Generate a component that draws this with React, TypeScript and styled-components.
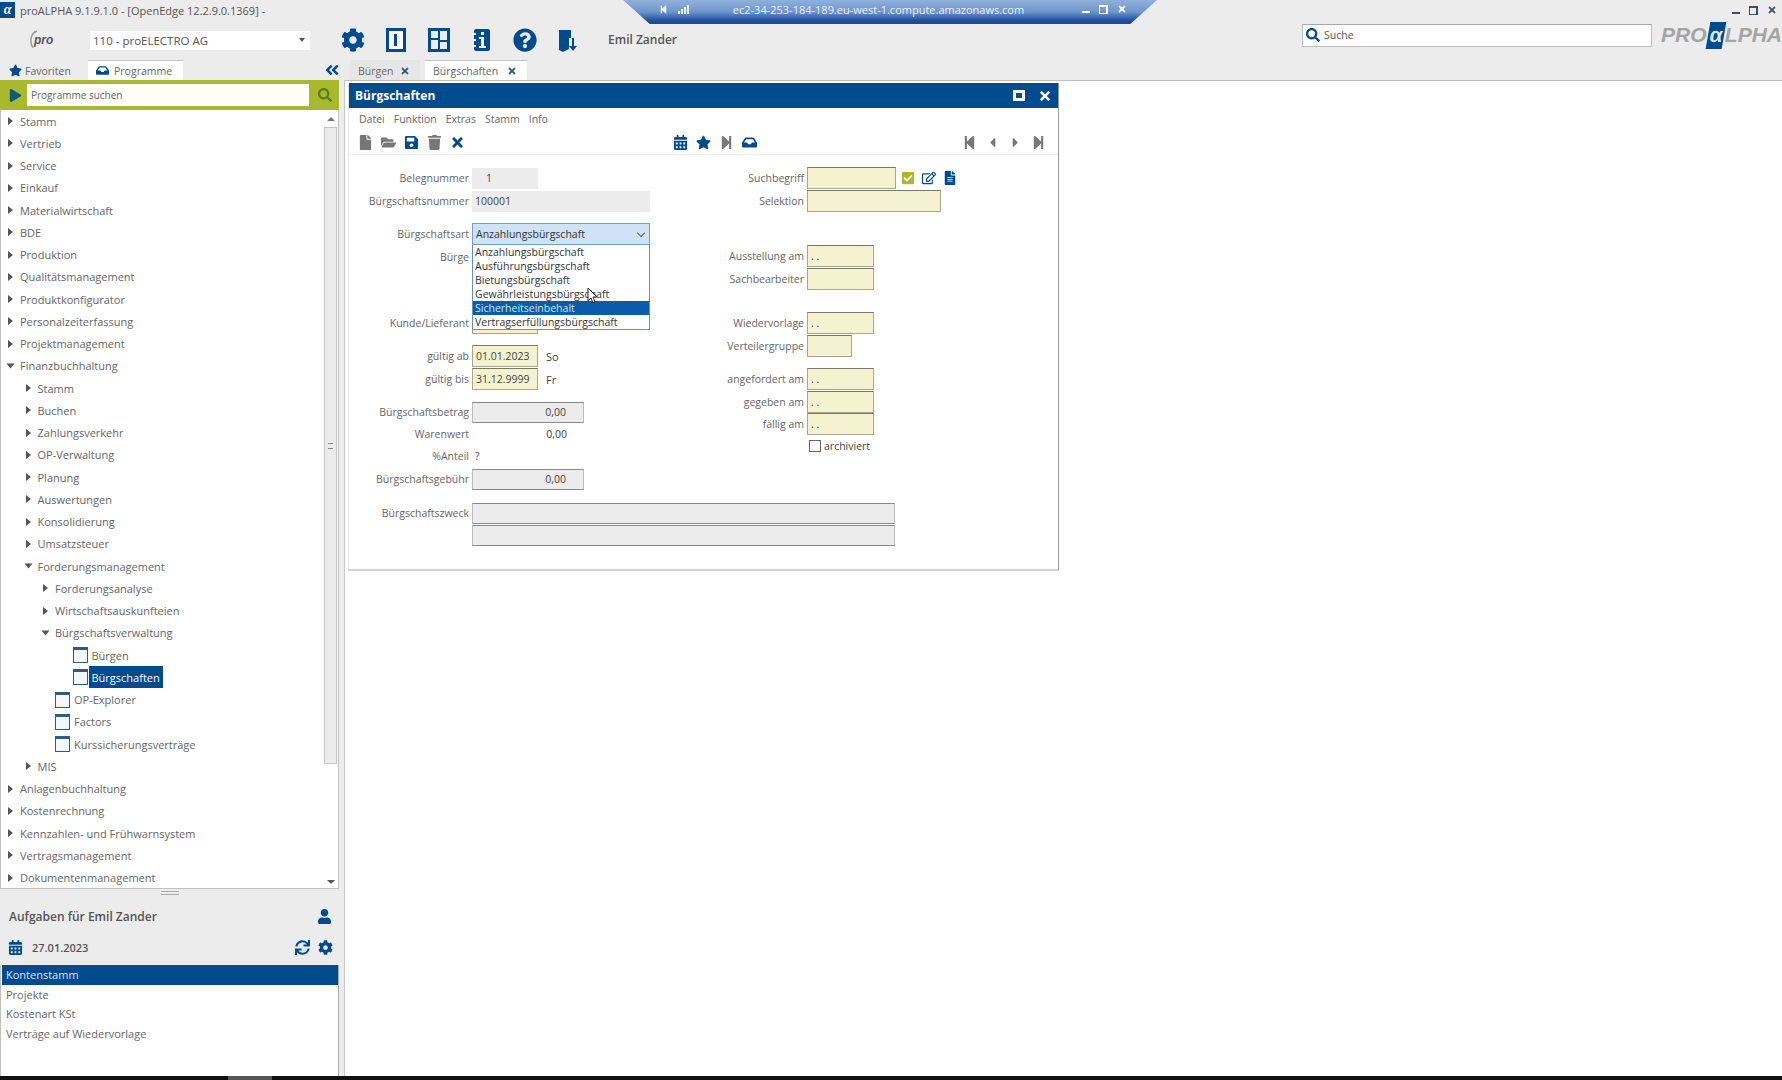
import styled, { createGlobalStyle } from 'styled-components'
import {
    FaCalendarAlt,
    FaCaretLeft,
    FaCaretRight,
    FaCheckSquare,
    FaCog,
    FaFile,
    FaFileAlt,
    FaFolderOpen,
    FaInfo,
    FaPlay,
    FaQuestionCircle,
    FaRegEdit,
    FaSave,
    FaSearch,
    FaStar,
    FaStepBackward,
    FaStepForward,
    FaSync,
    FaTimes,
    FaTrash,
    FaUser,
    FaAngleDoubleLeft,
    FaInbox,
} from 'react-icons/fa'

const BLUE = '#004b8d'
const GREY = '#ececec'

const GlobalStyle = createGlobalStyle`
    html, body {
        margin: 0;
        padding: 0;
        background: ${GREY};
    }
    * {
        box-sizing: border-box;
    }
`

const Page = styled.div`
    position: relative;
    width: 1782px;
    height: 1080px;
    overflow: hidden;
    display: flex;
    flex-direction: column;
    background: ${GREY};
    color: #555;
    font-family: 'Open Sans', 'Liberation Sans', sans-serif;
    font-size: 11px;
`

/* title bar */
const TitleBar = styled.div`
    height: 20px;
    display: flex;
    align-items: center;
    flex: none;
    padding-right: 5px;
`

const AppBadge = styled.div`
    width: 15px;
    height: 16px;
    background: ${BLUE};
    color: #fff;
    font: italic bold 14px/15px 'Liberation Serif', serif;
    text-align: center;
    margin-right: 5px;
`

const WindowButtons = styled.div`
    margin-left: auto;
    display: flex;
    align-items: center;
    gap: 9px;
    color: ${(p: { $light?: boolean }) => (p.$light ? '#fff' : '#3a5068')};
    font-size: 10px;
`

const MinGlyph = styled.span`
    display: block;
    width: 8px;
    height: 2px;
    margin-top: 5px;
    background: currentColor;
`

const RestoreGlyph = styled.span`
    display: block;
    width: 9px;
    height: 9px;
    border: 2px solid currentColor;
    border-bottom-width: 1px;
    border-left-width: 1px;
`

/* remote session bar lies over the title bar */
const RemoteBar = styled.div`
    position: absolute;
    left: 623px;
    top: 0;
    width: 534px;
    height: 24px;
    clip-path: polygon(0 0, 100% 0, 95% 100%, 5% 100%);
    background: linear-gradient(#8fb0dc, #6e95cb 50%, #1f4f9e 85%, #1d4a92);
    color: #eaf1fb;
    display: flex;
    align-items: center;
    padding: 0 30px 6px 36px;
    font-size: 11px;
`

const SignalBars = styled.div`
    display: flex;
    align-items: flex-end;
    gap: 1px;
    height: 9px;
    margin-left: 10px;
`

const SignalBar = styled.span<{ $h: number }>`
    width: 2px;
    height: ${(p) => p.$h}px;
    background: #eaf1fb;
`

const RemoteName = styled.span`
    flex: 1;
    text-align: center;
    padding-left: 18px;
    padding-right: 32px;
`

/* top toolbar */
const Toolbar = styled.div`
    height: 40px;
    flex: none;
    display: flex;
    align-items: center;
    padding-left: 28px;
`

const ComboBox = styled.div`
    width: 220px;
    height: 19px;
    margin-left: 32px;
    background: #fff;
    display: flex;
    align-items: center;
    justify-content: space-between;
    padding: 0 5px 0 3px;
    font-size: 11.5px;
`

const SmallDown = styled.span`
    width: 0;
    height: 0;
    border-left: 3px solid transparent;
    border-right: 3px solid transparent;
    border-top: 4px solid #555;
`

const MainIcons = styled.div`
    margin-left: 31px;
    display: flex;
    gap: 19px;
    color: ${BLUE};
`

const MainIcon = styled.div`
    width: 24px;
    height: 24px;
    display: flex;
    align-items: center;
    justify-content: center;
    font-size: 24px;
`

const UserName = styled.div`
    margin-left: 28px;
    font-size: 12px;
    font-weight: 600;
    margin-top: -2px;
`

const GlobalSearch = styled.div`
    margin-left: auto;
    width: 350px;
    height: 23px;
    margin-top: -10px;
    background: #fff;
    border: 1px solid #bdbdbd;
    border-top-color: #a8a8a8;
    display: flex;
    align-items: center;
    gap: 4px;
    padding-left: 3px;
    font-size: 10.5px;
    color: #555;

    svg {
        color: ${BLUE};
        font-size: 14px;
    }
`

const BrandLogo = styled.div`
    width: 121px;
    margin-left: 9px;
    margin-top: -10px;
    display: flex;
    align-items: center;
    font: italic bold 21px/26px 'Liberation Sans', sans-serif;
    color: #a4a4a4;
`

const BrandAlpha = styled.span`
    display: block;
    width: 24px;
    height: 27px;
    background: ${BLUE};
    color: #d9e6f3;
    text-align: center;
    transform: skewX(-10deg);
    margin: 0 1px;
    font-style: normal;
`

/* tabs */
const TabRow = styled.div`
    height: 20px;
    flex: none;
    display: flex;
    align-items: flex-end;
`

const SideTabs = styled.div`
    width: 345px;
    flex: none;
    height: 100%;
    display: flex;
    align-items: stretch;
    padding-left: 9px;
    position: relative;
`

const Tab = styled.div<{ $active?: boolean; $w: number }>`
    width: ${(p) => p.$w}px;
    display: flex;
    align-items: center;
    gap: 5px;
    padding-left: 8px;
    height: 20px;
    background: ${(p) => (p.$active ? '#fff' : 'transparent')};
    border-top: 1px solid ${(p) => (p.$active ? '#c4c4c4' : 'transparent')};
    font-size: 10.5px;
    color: #666;

    svg {
        color: ${BLUE};
    }
`

const FavTab = styled(Tab)`
    padding-left: 0;
    gap: 3px;
    margin-right: 3px;

    svg {
        font-size: 13px;
    }
`

const CollapseBtn = styled.div`
    margin-left: auto;
    margin-right: 5px;
    color: ${BLUE};
    font-size: 16px;
    display: flex;
    align-items: center;
`

const DocTabs = styled.div`
    display: flex;
    height: 100%;
    margin-left: 5px;
    gap: 5px;
`

const DocTab = styled(Tab)`
    padding-left: 8px;
    justify-content: space-between;
    padding-right: 10px;
    background: ${(p) => (p.$active ? '#fff' : '#e6e6e6')};

    svg {
        color: #30536f;
        font-size: 10px;
    }
`

/* body */
const Body = styled.div`
    flex: 1;
    display: flex;
    min-height: 0;
`

const Sidebar = styled.aside`
    width: 345px;
    flex: none;
    display: flex;
    flex-direction: column;
    padding-right: 5px;
    border-right: 1px solid #c8c8c8;
`

const SearchStrip = styled.div`
    height: 30px;
    flex: none;
    background: #a9b92e;
    display: flex;
    align-items: center;
    padding: 0 3px 0 9px;
    gap: 5px;
    color: #0d5a7c;
    font-size: 13px;
`

const ProgramSearch = styled.div`
    flex: 1;
    height: 22px;
    background: #fffef6;
    display: flex;
    align-items: center;
    padding-left: 4px;
    font-size: 10px;
    color: #666;
`

const SearchGlass = styled.div`
    width: 22px;
    display: flex;
    justify-content: center;
    color: #5e7a22;
    font-size: 14px;
`

const TreePanel = styled.div`
    height: 779px;
    flex: none;
    display: flex;
    background: #fff;
    border-left: 1px solid #c0c0c0;
    border-right: 1px solid #c0c0c0;
    border-bottom: 1px solid #c0c0c0;
`

const TreeList = styled.div`
    flex: 1;
    min-width: 0;
`

const TreeRow = styled.div<{ $level: number }>`
    height: 22.25px;
    display: flex;
    align-items: center;
    padding-left: ${(p) => 5 + p.$level * 17.5}px;
    white-space: nowrap;
`

const ArrowSlot = styled.div`
    width: 14px;
    flex: none;
    display: flex;
    align-items: center;
`

const Arrow = styled.span<{ $open?: boolean }>`
    width: 0;
    height: 0;
    margin-left: 2px;
    border-top: 4px solid transparent;
    border-bottom: 4px solid transparent;
    border-left: 5px solid #555;
    transform: ${(p) => (p.$open ? 'rotate(90deg)' : 'none')};
`

const WindowGlyph = styled.span`
    width: 15px;
    height: 16px;
    flex: none;
    margin-right: 4px;
    border: 1px solid #2d5d86;
    border-top-width: 3px;
    background: #f2f7fc;
`

const TreeLabel = styled.span<{ $selected?: boolean }>`
    height: 22px;
    display: flex;
    align-items: center;
    padding: 0 3px;
    margin-left: -3px;
    background: ${(p) => (p.$selected ? BLUE : 'transparent')};
    color: ${(p) => (p.$selected ? '#fff' : '#666')};
`

const Scrollbar = styled.div`
    width: 15px;
    flex: none;
    display: flex;
    flex-direction: column;
    align-items: center;
`

const ScrollArrow = styled.span<{ $down?: boolean }>`
    width: 0;
    height: 0;
    margin: ${(p) => (p.$down ? 'auto 0 4px' : '7px 0 3px')};
    border-left: 4px solid transparent;
    border-right: 4px solid transparent;
    ${(p) =>
        p.$down ? 'border-top: 4px solid #555;' : 'border-bottom: 4px solid #777;'}
`

const ScrollThumb = styled.div`
    width: 13px;
    height: 637px;
    margin-top: 3px;
    background: ${GREY};
    border: 1px solid #c4c4c4;
    display: flex;
    align-items: center;
    justify-content: center;
`

const ThumbGrip = styled.span`
    display: block;
    width: 5px;
    height: 6px;
    border-top: 1px solid #888;
    border-bottom: 1px solid #888;
`

const SplitHandle = styled.div`
    height: 14px;
    flex: none;
    display: flex;
    justify-content: center;
    align-items: flex-start;
    padding-top: 2px;
`

const SplitGrip = styled.span`
    display: block;
    width: 18px;
    height: 4px;
    border-top: 1px solid #aaa;
    border-bottom: 1px solid #aaa;
`

const TaskHead = styled.div`
    height: 26px;
    flex: none;
    display: flex;
    align-items: center;
    justify-content: space-between;
    padding: 0 7px 0 9px;
    font-size: 12px;
    font-weight: 600;
    color: #555;

    svg {
        color: ${BLUE};
        font-size: 15px;
    }
`

const TaskDate = styled.div`
    height: 36px;
    flex: none;
    display: flex;
    align-items: center;
    padding: 0 6px 0 8px;
    font-size: 11px;
    font-weight: 600;
    color: #555;

    svg {
        color: ${BLUE};
        font-size: 15px;
    }

    span {
        margin-left: 9px;
        flex: 1;
    }
`

const TaskTools = styled.div`
    display: flex;
    gap: 8px;
`

const TaskList = styled.div`
    flex: 1;
    background: #fff;
    margin-right: 0;
    border-left: 1px solid #c0c0c0;
    border-right: 1px solid #aaa;
    padding-left: 1px;
`

const TaskRow = styled.div<{ $selected?: boolean }>`
    height: 19.6px;
    display: flex;
    align-items: center;
    padding-left: 4px;
    background: ${(p) => (p.$selected ? BLUE : 'transparent')};
    color: ${(p) => (p.$selected ? '#d8e6f3' : '#666')};
`

const BottomStrip = styled.div`
    height: 4px;
    flex: none;
    background: #111;
    display: flex;
    padding-left: 228px;
`

const StripPiece = styled.span`
    width: 44px;
    background: #555;
`

/* main area */
const Main = styled.main`
    flex: 1;
    background: #fff;
    border-top: 1px solid #bdbdbd;
    padding: 2px 0 0 3px;
`

const Window = styled.section`
    width: 711px;
    height: 488px;
    display: flex;
    flex-direction: column;
    border-right: 1px solid #9a9a9a;
    border-bottom: 2px solid #d4d4d4;
    border-left: 1px solid #e4e4e4;
`

const WindowTitle = styled.div`
    height: 25px;
    flex: none;
    background: ${BLUE};
    color: #fff;
    display: flex;
    align-items: center;
    justify-content: space-between;
    padding: 0 6px;
    font-size: 12px;
    font-weight: 700;
`

const TitleTools = styled.div`
    display: flex;
    align-items: center;
    gap: 13px;
    font-size: 14px;
`

const MaxGlyph = styled.span`
    display: block;
    width: 12px;
    height: 11px;
    border: 3px solid #fff;
`

const MenuBar = styled.div`
    height: 22px;
    flex: none;
    display: flex;
    align-items: center;
    gap: 9px;
    padding-left: 10px;
    font-size: 10.5px;
    color: #666;
`

const ActionBar = styled.div`
    height: 25px;
    flex: none;
    display: flex;
    align-items: center;
    padding-left: 8px;
    border-bottom: 1px solid #f0f0f0;
`

const ActionGroup = styled.div<{ $gap: number }>`
    display: flex;
    gap: 7px;
    margin-left: ${(p) => p.$gap}px;
`

const ActionIcon = styled.div<{ $tone?: 'blue' | 'grey' }>`
    width: 16px;
    height: 16px;
    display: flex;
    align-items: center;
    justify-content: center;
    font-size: 15px;
    color: ${(p) => (p.$tone === 'grey' ? '#777' : BLUE)};
`

const FormGrid = styled.div`
    display: grid;
    grid-template-columns: 304px 1fr;
    padding-top: 12px;
`

const Column = styled.div`
    display: flex;
    flex-direction: column;
`

const FieldRow = styled.div<{ $top?: number; $labelWidth: number }>`
    height: 22px;
    flex: none;
    margin-top: ${(p) => p.$top ?? 0}px;
    display: flex;
    align-items: center;
    white-space: nowrap;

    > label {
        width: ${(p) => p.$labelWidth}px;
        flex: none;
        text-align: right;
        padding-right: 3px;
        font-size: 10.5px;
        color: #666;
    }
`

const Field = styled.div<{ $w: number; $tone: 'yellow' | 'grey' | 'flat' | 'none'; $right?: boolean }>`
    width: ${(p) => p.$w}px;
    height: ${(p) => (p.$tone === 'yellow' ? 22 : 21)}px;
    flex: none;
    display: flex;
    align-items: center;
    justify-content: ${(p) => (p.$right ? 'flex-end' : 'flex-start')};
    padding: 0 ${(p) => (p.$right ? 17 : 3)}px 0 3px;
    color: #444;
    font-size: 10.5px;
    background: ${(p) =>
        p.$tone === 'yellow'
            ? '#f5f3cf'
            : p.$tone === 'none'
              ? 'transparent'
              : GREY};
    border: ${(p) =>
        p.$tone === 'yellow'
            ? '1px solid #a9a88f'
            : p.$tone === 'grey'
              ? '1px solid #bdbdbd'
              : '0'};
    ${(p) => p.$tone === 'yellow' && 'border-top-color: #77776a;'}
    ${(p) => p.$tone === 'grey' && 'border-top-color: #888; border-bottom-color: #888;'}
`

const SideNote = styled.span`
    margin-left: 8px;
    color: #444;
`

const FieldIcons = styled.div`
    display: flex;
    gap: 7px;
    margin-left: 5px;
    font-size: 14px;
    color: ${BLUE};
`

const ComboWrap = styled.div`
    position: relative;
    width: 178px;
    height: 22px;
    flex: none;
`

const ComboValue = styled.div`
    height: 22px;
    background: #cfe2f8;
    border: 1px solid #6f9fcf;
    display: flex;
    align-items: center;
    justify-content: space-between;
    padding: 0 5px 0 3px;
    font-size: 10.5px;
    color: #333;
`

const ComboChevron = styled.span`
    width: 6px;
    height: 6px;
    margin-top: -3px;
    border-right: 1px solid #666;
    border-bottom: 1px solid #666;
    transform: rotate(45deg);
`

const DropList = styled.ul`
    position: absolute;
    left: 0;
    top: 22px;
    width: 178px;
    margin: 0;
    padding: 0;
    list-style: none;
    background: #fff;
    border: 1px solid #5f93c6;
    border-top: 0;
    z-index: 2;
`

const DropItem = styled.li<{ $active?: boolean }>`
    height: 14px;
    line-height: 14px;
    padding-left: 2px;
    font-size: 10.5px;
    background: ${(p) => (p.$active ? '#0a5cab' : 'transparent')};
    color: ${(p) => (p.$active ? '#cfe4f8' : '#333')};
`

const Cursor = styled.svg`
    position: absolute;
    left: 115px;
    top: 64px;
    z-index: 3;
`

const CheckBoxRow = styled.div`
    height: 22px;
    margin-top: 0;
    margin-left: 156px;
    display: flex;
    align-items: center;
    gap: 3px;
    color: #444;
    font-size: 10.5px;
`

const CheckBox = styled.span`
    width: 12px;
    height: 12px;
    border: 1px solid #666;
    background: #fff;
`

const treeItems: { label: string; level: number; kind: 'closed' | 'open' | 'leaf'; selected?: boolean }[] = [
    { label: 'Stamm', level: 0, kind: 'closed' },
    { label: 'Vertrieb', level: 0, kind: 'closed' },
    { label: 'Service', level: 0, kind: 'closed' },
    { label: 'Einkauf', level: 0, kind: 'closed' },
    { label: 'Materialwirtschaft', level: 0, kind: 'closed' },
    { label: 'BDE', level: 0, kind: 'closed' },
    { label: 'Produktion', level: 0, kind: 'closed' },
    { label: 'Qualitätsmanagement', level: 0, kind: 'closed' },
    { label: 'Produktkonfigurator', level: 0, kind: 'closed' },
    { label: 'Personalzeiterfassung', level: 0, kind: 'closed' },
    { label: 'Projektmanagement', level: 0, kind: 'closed' },
    { label: 'Finanzbuchhaltung', level: 0, kind: 'open' },
    { label: 'Stamm', level: 1, kind: 'closed' },
    { label: 'Buchen', level: 1, kind: 'closed' },
    { label: 'Zahlungsverkehr', level: 1, kind: 'closed' },
    { label: 'OP-Verwaltung', level: 1, kind: 'closed' },
    { label: 'Planung', level: 1, kind: 'closed' },
    { label: 'Auswertungen', level: 1, kind: 'closed' },
    { label: 'Konsolidierung', level: 1, kind: 'closed' },
    { label: 'Umsatzsteuer', level: 1, kind: 'closed' },
    { label: 'Forderungsmanagement', level: 1, kind: 'open' },
    { label: 'Forderungsanalyse', level: 2, kind: 'closed' },
    { label: 'Wirtschaftsauskunfteien', level: 2, kind: 'closed' },
    { label: 'Bürgschaftsverwaltung', level: 2, kind: 'open' },
    { label: 'Bürgen', level: 3, kind: 'leaf' },
    { label: 'Bürgschaften', level: 3, kind: 'leaf', selected: true },
    { label: 'OP-Explorer', level: 2, kind: 'leaf' },
    { label: 'Factors', level: 2, kind: 'leaf' },
    { label: 'Kurssicherungsverträge', level: 2, kind: 'leaf' },
    { label: 'MIS', level: 1, kind: 'closed' },
    { label: 'Anlagenbuchhaltung', level: 0, kind: 'closed' },
    { label: 'Kostenrechnung', level: 0, kind: 'closed' },
    { label: 'Kennzahlen- und Frühwarnsystem', level: 0, kind: 'closed' },
    { label: 'Vertragsmanagement', level: 0, kind: 'closed' },
    { label: 'Dokumentenmanagement', level: 0, kind: 'closed' },
]

const guaranteeTypes = [
    'Anzahlungsbürgschaft',
    'Ausführungsbürgschaft',
    'Bietungsbürgschaft',
    'Gewährleistungsbürgschaft',
    'Sicherheitseinbehalt',
    'Vertragserfüllungsbürgschaft',
]

const tasks = ['Kontenstamm', 'Projekte', 'Kostenart KSt', 'Verträge auf Wiedervorlage']

const L = 123
const R = 154

function PanelIcon() {
    return (
        <svg width='20' height='24' viewBox='0 0 20 24'>
            <rect x='1.5' y='1.5' width='17' height='21' fill='#fff' stroke={BLUE} strokeWidth='3' />
            <rect x='8' y='6' width='3' height='12' fill={BLUE} />
        </svg>
    )
}

function LayoutIcon() {
    return (
        <svg width='22' height='24' viewBox='0 0 22 24'>
            <rect x='1.5' y='1.5' width='19' height='21' fill='#e8f1f9' stroke={BLUE} strokeWidth='3' />
            <rect x='10' y='3' width='2' height='18' fill={BLUE} />
            <rect x='3' y='10' width='7' height='2' fill={BLUE} />
            <rect x='12' y='12' width='7' height='2' fill={BLUE} />
        </svg>
    )
}

function InfoBookIcon() {
    return (
        <svg width='18' height='24' viewBox='0 0 18 24'>
            <rect x='1' y='1' width='16' height='22' rx='2' fill={BLUE} />
            <rect x='0' y='5' width='3' height='2' fill='#fff' />
            <rect x='0' y='11' width='3' height='2' fill='#fff' />
            <rect x='0' y='17' width='3' height='2' fill='#fff' />
            <rect x='8' y='4' width='3' height='3' fill='#fff' />
            <path d='M6 9h5v9h2v2H6v-2h2v-7H6z' fill='#fff' />
        </svg>
    )
}

function ExitIcon() {
    return (
        <svg width='22' height='24' viewBox='0 0 22 24'>
            <path d='M2 2h10v19l-6 3-4-2z' fill={BLUE} />
            <path d='M6 2h8v8h-2V4H6z' fill={BLUE} />
            <path d='M15 10h2v8h3l-4 5-4-5h3z' fill={BLUE} />
        </svg>
    )
}

function ProMark() {
    return (
        <svg width='30' height='24' viewBox='0 0 30 24'>
            <path d='M9 3C3 5 1 13 5 20' fill='none' stroke='#9a9a9a' strokeWidth='1.5' />
            <text x='6' y='16' fontFamily='Liberation Sans, sans-serif' fontStyle='italic' fontWeight='700' fontSize='12' fill='#555'>
                pro
            </text>
        </svg>
    )
}

export default function App() {
    return (
        <Page>
            <GlobalStyle />
            <TitleBar>
                <AppBadge>α</AppBadge>
                <span>proALPHA 9.1.9.1.0 - [OpenEdge 12.2.9.0.1369] -</span>
                <WindowButtons>
                    <MinGlyph />
                    <RestoreGlyph />
                    <FaTimes />
                </WindowButtons>
            </TitleBar>

            <RemoteBar>
                <FaStepBackward size={9} />
                <SignalBars>
                    <SignalBar $h={3} />
                    <SignalBar $h={5} />
                    <SignalBar $h={7} />
                    <SignalBar $h={9} />
                </SignalBars>
                <RemoteName>ec2-34-253-184-189.eu-west-1.compute.amazonaws.com</RemoteName>
                <WindowButtons $light>
                    <MinGlyph />
                    <RestoreGlyph />
                    <FaTimes />
                </WindowButtons>
            </RemoteBar>

            <Toolbar>
                <ProMark />
                <ComboBox>
                    110 - proELECTRO AG
                    <SmallDown />
                </ComboBox>
                <MainIcons>
                    <MainIcon><FaCog /></MainIcon>
                    <MainIcon><PanelIcon /></MainIcon>
                    <MainIcon><LayoutIcon /></MainIcon>
                    <MainIcon><InfoBookIcon /></MainIcon>
                    <MainIcon><FaQuestionCircle /></MainIcon>
                    <MainIcon><ExitIcon /></MainIcon>
                </MainIcons>
                <UserName>Emil Zander</UserName>
                <GlobalSearch>
                    <FaSearch />
                    Suche
                </GlobalSearch>
                <BrandLogo>
                    PRO
                    <BrandAlpha>α</BrandAlpha>
                    LPHA
                </BrandLogo>
            </Toolbar>

            <TabRow>
                <SideTabs>
                    <FavTab $w={76}>
                        <FaStar />
                        Favoriten
                    </FavTab>
                    <Tab $active $w={95}>
                        <FaInbox size={13} />
                        Programme
                    </Tab>
                    <CollapseBtn>
                        <FaAngleDoubleLeft />
                    </CollapseBtn>
                </SideTabs>
                <DocTabs>
                    <DocTab $w={70}>
                        Bürgen
                        <FaTimes />
                    </DocTab>
                    <DocTab $active $w={102}>
                        Bürgschaften
                        <FaTimes />
                    </DocTab>
                </DocTabs>
            </TabRow>

            <Body>
                <Sidebar>
                    <SearchStrip>
                        <FaPlay />
                        <ProgramSearch>Programme suchen</ProgramSearch>
                        <SearchGlass>
                            <FaSearch />
                        </SearchGlass>
                    </SearchStrip>
                    <TreePanel>
                        <TreeList>
                            {treeItems.map((item, i) => (
                                <TreeRow key={i} $level={item.level}>
                                    <ArrowSlot>
                                        {item.kind !== 'leaf' && <Arrow $open={item.kind === 'open'} />}
                                    </ArrowSlot>
                                    {item.kind === 'leaf' && <WindowGlyph />}
                                    <TreeLabel $selected={item.selected}>{item.label}</TreeLabel>
                                </TreeRow>
                            ))}
                        </TreeList>
                        <Scrollbar>
                            <ScrollArrow />
                            <ScrollThumb>
                                <ThumbGrip />
                            </ScrollThumb>
                            <ScrollArrow $down />
                        </Scrollbar>
                    </TreePanel>
                    <SplitHandle>
                        <SplitGrip />
                    </SplitHandle>
                    <TaskHead>
                        Aufgaben für Emil Zander
                        <FaUser />
                    </TaskHead>
                    <TaskDate>
                        <FaCalendarAlt />
                        <span>27.01.2023</span>
                        <TaskTools>
                            <FaSync />
                            <FaCog />
                        </TaskTools>
                    </TaskDate>
                    <TaskList>
                        {tasks.map((t, i) => (
                            <TaskRow key={t} $selected={i === 0}>
                                {t}
                            </TaskRow>
                        ))}
                    </TaskList>
                </Sidebar>

                <Main>
                    <Window>
                        <WindowTitle>
                            Bürgschaften
                            <TitleTools>
                                <MaxGlyph />
                                <FaTimes />
                            </TitleTools>
                        </WindowTitle>
                        <MenuBar>
                            <span>Datei</span>
                            <span>Funktion</span>
                            <span>Extras</span>
                            <span>Stamm</span>
                            <span>Info</span>
                        </MenuBar>
                        <ActionBar>
                            <ActionGroup $gap={0}>
                                <ActionIcon $tone='grey'><FaFile /></ActionIcon>
                                <ActionIcon $tone='grey'><FaFolderOpen /></ActionIcon>
                                <ActionIcon><FaSave /></ActionIcon>
                                <ActionIcon $tone='grey'><FaTrash /></ActionIcon>
                                <ActionIcon><FaTimes /></ActionIcon>
                            </ActionGroup>
                            <ActionGroup $gap={207}>
                                <ActionIcon><FaCalendarAlt /></ActionIcon>
                                <ActionIcon><FaStar /></ActionIcon>
                                <ActionIcon $tone='grey'><FaStepForward /></ActionIcon>
                                <ActionIcon><FaInbox /></ActionIcon>
                            </ActionGroup>
                            <ActionGroup $gap={204}>
                                <ActionIcon $tone='grey'><FaStepBackward /></ActionIcon>
                                <ActionIcon $tone='grey'><FaCaretLeft /></ActionIcon>
                                <ActionIcon $tone='grey'><FaCaretRight /></ActionIcon>
                                <ActionIcon $tone='grey'><FaStepForward /></ActionIcon>
                            </ActionGroup>
                        </ActionBar>

                        <FormGrid>
                            <Column>
                                <FieldRow $labelWidth={L}>
                                    <label>Belegnummer</label>
                                    <Field $w={66} $tone='flat'>&nbsp;&nbsp;&nbsp;&nbsp;1</Field>
                                </FieldRow>
                                <FieldRow $labelWidth={L} $top={1}>
                                    <label>Bürgschaftsnummer</label>
                                    <Field $w={178} $tone='flat'>100001</Field>
                                </FieldRow>
                                <FieldRow $labelWidth={L} $top={11}>
                                    <label>Bürgschaftsart</label>
                                    <ComboWrap>
                                        <ComboValue>
                                            Anzahlungsbürgschaft
                                            <ComboChevron />
                                        </ComboValue>
                                        <DropList>
                                            {guaranteeTypes.map((g, i) => (
                                                <DropItem key={g} $active={i === 4}>
                                                    {g}
                                                </DropItem>
                                            ))}
                                        </DropList>
                                        <Cursor width='12' height='18' viewBox='0 0 12 18'>
                                            <path d='M1 1v13l3-3 2 5 2-1-2-5h4z' fill='#fff' stroke='#222' strokeWidth='1' />
                                        </Cursor>
                                    </ComboWrap>
                                </FieldRow>
                                <FieldRow $labelWidth={L} $top={1}>
                                    <label>Bürge</label>
                                </FieldRow>
                                <FieldRow $labelWidth={L} $top={44}>
                                    <label>Kunde/Lieferant</label>
                                    <Field $w={66} $tone='yellow' />
                                </FieldRow>
                                <FieldRow $labelWidth={L} $top={11}>
                                    <label>gültig ab</label>
                                    <Field $w={66} $tone='yellow'>01.01.2023</Field>
                                    <SideNote>So</SideNote>
                                </FieldRow>
                                <FieldRow $labelWidth={L} $top={1}>
                                    <label>gültig bis</label>
                                    <Field $w={66} $tone='yellow'>31.12.9999</Field>
                                    <SideNote>Fr</SideNote>
                                </FieldRow>
                                <FieldRow $labelWidth={L} $top={11}>
                                    <label>Bürgschaftsbetrag</label>
                                    <Field $w={112} $tone='grey' $right>0,00</Field>
                                </FieldRow>
                                <FieldRow $labelWidth={L}>
                                    <label>Warenwert</label>
                                    <Field $w={112} $tone='none' $right>0,00</Field>
                                </FieldRow>
                                <FieldRow $labelWidth={L}>
                                    <label>%Anteil</label>
                                    <Field $w={40} $tone='none'>?</Field>
                                </FieldRow>
                                <FieldRow $labelWidth={L} $top={1}>
                                    <label>Bürgschaftsgebühr</label>
                                    <Field $w={112} $tone='grey' $right>0,00</Field>
                                </FieldRow>
                                <FieldRow $labelWidth={L} $top={12}>
                                    <label>Bürgschaftszweck</label>
                                    <Field $w={423} $tone='grey' />
                                </FieldRow>
                                <FieldRow $labelWidth={L}>
                                    <label />
                                    <Field $w={423} $tone='grey' />
                                </FieldRow>
                            </Column>
                            <Column>
                                <FieldRow $labelWidth={R}>
                                    <label>Suchbegriff</label>
                                    <Field $w={89} $tone='yellow' />
                                    <FieldIcons>
                                        <FaCheckSquare color='#a9b92e' />
                                        <FaRegEdit />
                                        <FaFileAlt />
                                    </FieldIcons>
                                </FieldRow>
                                <FieldRow $labelWidth={R} $top={1}>
                                    <label>Selektion</label>
                                    <Field $w={134} $tone='yellow' />
                                </FieldRow>
                                <FieldRow $labelWidth={R} $top={33}>
                                    <label>Ausstellung am</label>
                                    <Field $w={67} $tone='yellow'>. .</Field>
                                </FieldRow>
                                <FieldRow $labelWidth={R} $top={1}>
                                    <label>Sachbearbeiter</label>
                                    <Field $w={67} $tone='yellow' />
                                </FieldRow>
                                <FieldRow $labelWidth={R} $top={22}>
                                    <label>Wiedervorlage</label>
                                    <Field $w={67} $tone='yellow'>. .</Field>
                                </FieldRow>
                                <FieldRow $labelWidth={R} $top={1}>
                                    <label>Verteilergruppe</label>
                                    <Field $w={45} $tone='yellow' />
                                </FieldRow>
                                <FieldRow $labelWidth={R} $top={11}>
                                    <label>angefordert am</label>
                                    <Field $w={67} $tone='yellow'>. .</Field>
                                </FieldRow>
                                <FieldRow $labelWidth={R} $top={1}>
                                    <label>gegeben am</label>
                                    <Field $w={67} $tone='yellow'>. .</Field>
                                </FieldRow>
                                <FieldRow $labelWidth={R}>
                                    <label>fällig am</label>
                                    <Field $w={67} $tone='yellow'>. .</Field>
                                </FieldRow>
                                <CheckBoxRow>
                                    <CheckBox />
                                    archiviert
                                </CheckBoxRow>
                            </Column>
                        </FormGrid>
                    </Window>
                </Main>
            </Body>
            <BottomStrip>
                <StripPiece />
            </BottomStrip>
        </Page>
    )
}
